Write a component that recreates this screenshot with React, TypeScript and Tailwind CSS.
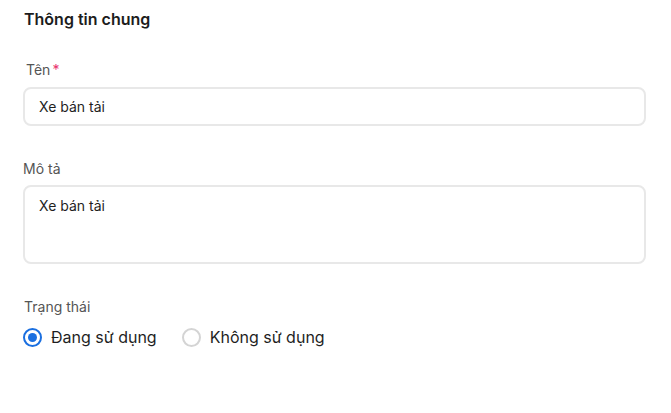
import React from 'react';

const font = { fontFamily: 'Inter, "Noto Sans", sans-serif' };

const Radio: React.FC<{ checked?: boolean; label: string }> = ({ checked, label }) => (
  <label className="flex items-center gap-[9px] cursor-pointer">
    {checked ? (
      <span className="w-[19px] h-[19px] rounded-full border-2 border-[#1a6fe0] flex items-center justify-center">
        <span className="w-[9px] h-[9px] rounded-full bg-[#1a6fe0]" />
      </span>
    ) : (
      <span className="w-[19px] h-[19px] rounded-full border-2 border-[#d4d4d4]" />
    )}
    <span className="text-[16px] leading-5 text-[#1f1f1f]">{label}</span>
  </label>
);

export default function App() {
  return (
    <div className="w-[671px] h-[413px] bg-white pl-[23px] pr-[25px] pt-[9px]" style={font}>
      <h2 className="pl-px text-[16px] leading-5 font-semibold text-[#1c1c1c]">Thông tin chung</h2>

      <div className="mt-8">
        <label className="block pl-[3px] text-[14px] leading-[18px] text-[#555]">
          Tên<span className="text-[#e8336d] ml-[2px]">*</span>
        </label>
        <input
          readOnly
          value="Xe bán tải"
          className="mt-2 w-full h-[39px] rounded-lg border-2 border-[#e8e8e8] px-[14px] text-[14px] text-[#1f1f1f] outline-none"
        />
      </div>

      <div className="mt-[34px]">
        <label className="block text-[14px] leading-[18px] text-[#555]">Mô tả</label>
        <textarea
          readOnly
          value="Xe bán tải"
          className="mt-[7px] block w-full h-[79px] resize-none rounded-lg border-2 border-[#e8e8e8] px-[14px] py-[9px] text-[14px] leading-5 text-[#1f1f1f] outline-none"
        />
      </div>

      <div className="mt-[34px]">
        <div className="pl-px text-[14px] leading-[18px] text-[#555]">Trạng thái</div>
        <div className="mt-[11px] flex items-center gap-[25px]">
          <Radio checked label="Đang sử dụng" />
          <Radio label="Không sử dụng" />
        </div>
      </div>
    </div>
  );
}
